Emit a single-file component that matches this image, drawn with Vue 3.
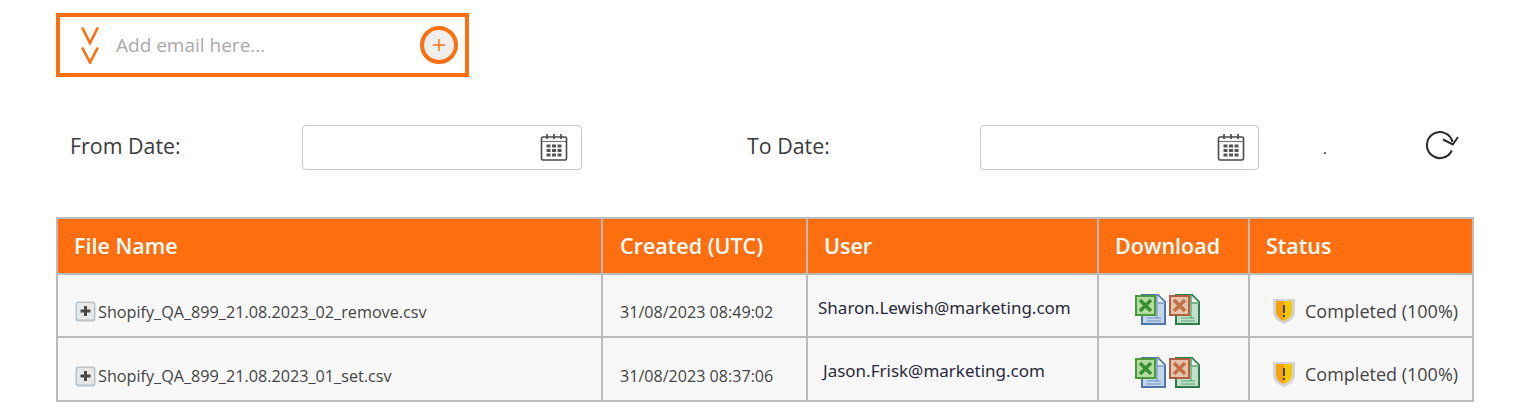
<script setup>
const rows = [
  { file: 'Shopify_QA_899_21.08.2023_02_remove.csv', created: '31/08/2023 08:49:02', user: 'Sharon.Lewish@marketing.com', cls: 'first' },
  { file: 'Shopify_QA_899_21.08.2023_01_set.csv', created: '31/08/2023 08:37:06', user: 'Jason.Frisk@marketing.com', cls: 'second' },
]
const dates = [
  { label: 'From Date:', cls: 'from' },
  { label: 'To Date:', cls: 'to' },
]
const cells = [0, 1, 2]
</script>

<template>
  <div class="page">
    <div class="email-box">
      <svg class="chevrons" width="18" height="38" viewBox="0 0 18 38" fill="none">
        <path d="M1.2 1.5 L9 17 L16.8 1.5 M1.2 21.5 L9 36.5 L16.8 21.5" stroke="#ff6f10" stroke-width="2.6" />
      </svg>
      <span class="placeholder">Add email here...</span>
      <button class="add" type="button">
        <svg width="14" height="14" viewBox="0 0 14 14"><path d="M7 1 V13 M1 7 H13" stroke="#ff6f10" stroke-width="1.4" /></svg>
      </button>
    </div>

    <div class="filters">
      <template v-for="d in dates" :key="d.label">
        <label class="date-label" :class="d.cls">{{ d.label }}</label>
        <div class="date-input" :class="d.cls">
          <svg width="28" height="28" viewBox="0 0 28 28" fill="none">
            <rect x="1.5" y="4" width="25" height="23" rx="1.5" fill="#fff" stroke="#4a4a4a" stroke-width="1.6" />
            <path d="M2 8.5 H26" stroke="#777" stroke-width="1.2" />
            <path d="M7 1 V6 M14 1 V6 M21 1 V6" stroke="#4a4a4a" stroke-width="1.6" />
            <g fill="#555">
              <template v-for="y in cells" :key="y">
                <rect x="6.5" :y="11.5 + y * 4.5" width="4" height="3" />
                <rect x="12" :y="11.5 + y * 4.5" width="4" height="3" />
                <rect x="17.5" :y="11.5 + y * 4.5" width="4" height="3" />
              </template>
            </g>
          </svg>
        </div>
      </template>
      <span class="dot">.</span>
      <svg class="refresh" width="34" height="30" viewBox="0 0 34 30" fill="none">
        <path d="M25.8 20.5 A13 13 0 1 1 26.6 12" stroke="#2b2b2b" stroke-width="2" />
        <path d="M17 9.5 L26.8 14.5 L32 7" stroke="#2b2b2b" stroke-width="2" />
      </svg>
    </div>

    <table class="files">
      <colgroup>
        <col style="width: 545px" /><col style="width: 205px" /><col style="width: 291px" /><col style="width: 151px" /><col style="width: 224px" />
      </colgroup>
      <thead>
        <tr>
          <th>File Name</th><th>Created (UTC)</th><th>User</th><th>Download</th><th>Status</th>
        </tr>
      </thead>
      <tbody>
        <tr v-for="r in rows" :key="r.file" :class="r.cls">
          <td class="file">
            <span class="file-wrap">
              <svg width="21" height="21" viewBox="0 0 21 21">
                <rect x="0.5" y="0.5" width="20" height="20" rx="3" fill="#b9c3cc" />
                <rect x="2" y="2" width="17" height="16.5" rx="2" fill="#e6e8ea" />
                <path d="M10.5 5 V15 M5.5 10 H15.5" stroke="#4a4a4a" stroke-width="3" />
              </svg>
              {{ r.file }}
            </span>
          </td>
          <td class="created">{{ r.created }}</td>
          <td class="user"><span>{{ r.user }}</span></td>
          <td class="download">
            <span class="xls-pair">
              <svg width="31" height="31" viewBox="0 0 31 31">
                <path d="M7 1 H23 L30 8 V30 H7 Z" fill="#c5d6ec" stroke="#4f76ab" stroke-width="2" />
                <path d="M22 1 V9 H30" fill="#eaf1fa" stroke="#7b9cc7" stroke-width="1.5" />
                <path d="M12 24 H26 M12 27 H26 M22 10 V24" stroke="#6d90c0" stroke-width="1.2" />
                <rect x="1" y="2" width="19" height="19" fill="#b5dba3" stroke="#4a9a3c" stroke-width="2" />
                <path d="M5 6 L16 17 M16 6 L5 17" stroke="#3a8f33" stroke-width="3.6" />
              </svg>
              <svg width="31" height="31" viewBox="0 0 31 31">
                <path d="M7 1 H23 L30 8 V30 H7 Z" fill="#bfe2c8" stroke="#2f7b4c" stroke-width="2" />
                <path d="M22 1 V9 H30" fill="#e4f4e8" stroke="#5c9e75" stroke-width="1.5" />
                <path d="M12 24 H26 M12 27 H26 M22 10 V24" stroke="#5ba177" stroke-width="1.2" />
                <rect x="1" y="2" width="19" height="19" fill="#e8c3ac" stroke="#b0603c" stroke-width="2" />
                <path d="M5 6 L16 17 M16 6 L5 17" stroke="#c0714a" stroke-width="3.6" />
              </svg>
            </span>
          </td>
          <td class="status">
            <span class="status-wrap">
              <svg width="24" height="27" viewBox="0 0 24 27">
                <path d="M1 1 H23 V14 C23 21 16 24 12 26 C8 24 1 21 1 14 Z" fill="#d3d3d3" />
                <path d="M4 3 H12 V23 C8 21 4 19 4 13 Z" fill="#f5a30c" />
                <path d="M12 3 H20 V13 C20 19 16 21 12 23 Z" fill="#f3c70c" />
                <path d="M12 7 V15 M12 17 V19" stroke="#44403a" stroke-width="2" />
              </svg>
              Completed (100%)
            </span>
          </td>
        </tr>
      </tbody>
    </table>
  </div>
</template>

<style scoped>
.page {
  width: 1513px;
  height: 419px;
  overflow: hidden;
  padding: 13px 0 0 56px;
  box-sizing: border-box;
  background: #fff;
  font-family: "Open Sans", "Noto Sans", sans-serif;
  color: #3f3f3f;
}
.email-box {
  width: 413px;
  height: 64px;
  box-sizing: border-box;
  border: 4px solid #ff6f10;
  display: flex;
  align-items: center;
  padding: 0 7px 0 21px;
}
.chevrons { flex: none; margin-right: 17px; }
.placeholder { font-size: 19px; color: #aaa; flex: 1; }
.add {
  width: 38px;
  height: 38px;
  box-sizing: border-box;
  border-radius: 50%;
  border: 4px solid #ff6f10;
  background: #efefef;
  padding: 0;
  display: flex;
  align-items: center;
  justify-content: center;
}
.filters {
  display: flex;
  align-items: center;
  height: 46px;
  margin: 47px 0 47px 14px;
  width: 1403px;
}
.date-label { font-size: 21.4px; color: #3a3a3a; margin-bottom: 3px; }
.date-label.from { width: 232px; }
.date-label.to { width: 233px; margin-left: 165px; }
.date-input {
  height: 45px;
  box-sizing: border-box;
  border: 1px solid #c9c9c9;
  border-radius: 4px;
  display: flex;
  align-items: center;
  justify-content: flex-end;
  padding-right: 13px;
}
.date-input.from { width: 280px; }
.date-input.to { width: 279px; }
.dot { font-size: 14px; margin-left: 64px; margin-top: 2px; color: #000; }
.refresh { margin-left: 99px; margin-bottom: 5px; }
.files {
  border-collapse: collapse;
  table-layout: fixed;
  width: 1416px;
}
th, td { border: 2px solid #bcbcbc; padding: 0; box-sizing: border-box; }
th {
  background: #ff6f10;
  color: #fff;
  font-size: 21.5px;
  font-weight: 600;
  text-align: left;
  height: 56px;
  padding: 0 0 2px 16px;
}
th:nth-child(2) { padding-left: 17px; }
td {
  background: #f8f8f8;
  color: #444;
  font-size: 16.2px;
}
.first td { height: 63px; }
.second td { height: 64px; }
.file-wrap { display: flex; align-items: center; gap: 2px; padding-left: 17px; }
.first .file { padding-top: 12px; }
.second .file { padding-top: 14px; }
.created { font-size: 16.1px; padding-left: 17px; }
.first .created { padding-top: 12px; }
.second .created { padding-top: 14px; }
.user { font-family: "Noto Sans", sans-serif; font-size: 17px; color: #2a2a3a; }
.first .user span { display: block; margin: 4px 0 0 10px; }
.second .user span { display: block; margin: 2px 0 0 15px; }
.xls-pair { display: flex; justify-content: center; align-items: center; margin-left: -13px; }
.xls-pair svg { filter: blur(0.4px); }
.xls-pair svg:last-child { margin-left: 3px; }
.first .download { padding-top: 7px; }
.second .download { padding-top: 7px; }
.status-wrap { display: flex; align-items: center; gap: 9px; padding-left: 22px; font-size: 18px; white-space: nowrap; }
.first .status { padding-top: 11px; }
.second .status { padding-top: 10px; }
</style>
